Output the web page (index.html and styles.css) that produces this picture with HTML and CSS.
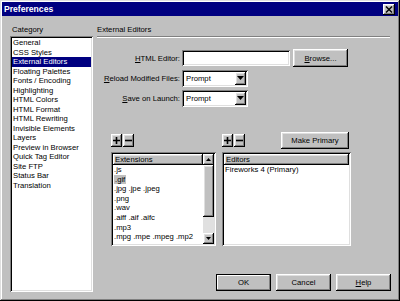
FILE: index.html
```html
<!DOCTYPE html>
<html lang="en">
<head>
    <meta charset="UTF-8">
    <title>Preferences</title>
    <link rel="stylesheet" href="styles.css">
</head>
<body>
    <div class="window">
        <div class="titlebar">
            <span class="title">Preferences</span>
            <span class="close-btn raised">
                <svg width="8" height="7" viewBox="0 0 8 7"><path d="M1 0.5 L7 6.5 M7 0.5 L1 6.5" stroke="#000" stroke-width="1.4"/></svg>
            </span>
        </div>

        <div class="content">
            <div class="category-col">
                <div class="group-label">Category</div>
                <ul class="category-list sunken">
                    <li>General</li>
                    <li>CSS Styles</li>
                    <li class="selected">External Editors</li>
                    <li>Floating Palettes</li>
                    <li>Fonts / Encoding</li>
                    <li>Highlighting</li>
                    <li>HTML Colors</li>
                    <li>HTML Format</li>
                    <li>HTML Rewriting</li>
                    <li>Invisible Elements</li>
                    <li>Layers</li>
                    <li>Preview in Browser</li>
                    <li>Quick Tag Editor</li>
                    <li>Site FTP</li>
                    <li>Status Bar</li>
                    <li>Translation</li>
                </ul>
            </div>

            <div class="panel">
                <div class="panel-title">External Editors</div>
                <div class="separator"></div>

                <div class="form-grid">
                    <div class="form-label"><u>H</u>TML Editor:</div>
                    <div class="field-row">
                        <span class="text-input sunken"></span>
                        <span class="btn raised browse-btn"><u>B</u>rowse...</span>
                    </div>

                    <div class="form-label"><u>R</u>eload Modified Files:</div>
                    <div class="field-row">
                        <span class="select sunken">
                            <span class="select-value">Prompt</span>
                            <span class="select-arrow raised">
                                <svg width="7" height="4" viewBox="0 0 7 4"><path d="M0 0 H7 L3.5 4 Z" fill="#000"/></svg>
                            </span>
                        </span>
                    </div>

                    <div class="form-label"><u>S</u>ave on Launch:</div>
                    <div class="field-row">
                        <span class="select sunken">
                            <span class="select-value">Prompt</span>
                            <span class="select-arrow raised">
                                <svg width="7" height="4" viewBox="0 0 7 4"><path d="M0 0 H7 L3.5 4 Z" fill="#000"/></svg>
                            </span>
                        </span>
                    </div>
                </div>

                <div class="lists">
                    <div class="list-col ext-col">
                        <div class="list-tools">
                            <span class="tool-btn raised">
                                <svg width="7" height="7" viewBox="0 0 7 7"><path d="M3.5 0 V7 M0 3.5 H7" stroke="#000" stroke-width="1.6"/></svg>
                            </span>
                            <span class="tool-btn raised">
                                <svg width="7" height="7" viewBox="0 0 7 7"><path d="M0 3.5 H7" stroke="#000" stroke-width="1.6"/></svg>
                            </span>
                        </div>
                        <div class="listbox sunken">
                            <div class="list-main">
                                <div class="list-header raised">Extensions</div>
                                <div class="list-row">.js</div>
                                <div class="list-row"><span class="inactive-sel">.gif</span></div>
                                <div class="list-row">.jpg .jpe .jpeg</div>
                                <div class="list-row">.png</div>
                                <div class="list-row">.wav</div>
                                <div class="list-row">.aiff .aif .aifc</div>
                                <div class="list-row">.mp3</div>
                                <div class="list-row">.mpg .mpe .mpeg .mp2</div>
                            </div>
                            <div class="scrollbar">
                                <span class="scroll-btn raised">
                                    <svg width="5" height="3" viewBox="0 0 5 3"><path d="M0 3 H5 L2.5 0 Z" fill="#000"/></svg>
                                </span>
                                <span class="scroll-thumb raised"></span>
                                <span class="scroll-track"></span>
                                <span class="scroll-btn raised">
                                    <svg width="5" height="3" viewBox="0 0 5 3"><path d="M0 0 H5 L2.5 3 Z" fill="#000"/></svg>
                                </span>
                            </div>
                        </div>
                    </div>

                    <div class="list-col editors-col">
                        <div class="list-tools">
                            <span class="tool-btn raised">
                                <svg width="7" height="7" viewBox="0 0 7 7"><path d="M3.5 0 V7 M0 3.5 H7" stroke="#000" stroke-width="1.6"/></svg>
                            </span>
                            <span class="tool-btn raised">
                                <svg width="7" height="7" viewBox="0 0 7 7"><path d="M0 3.5 H7" stroke="#000" stroke-width="1.6"/></svg>
                            </span>
                            <span class="btn raised primary-btn">Make Primary</span>
                        </div>
                        <div class="listbox sunken">
                            <div class="list-main">
                                <div class="list-header raised">Editors</div>
                                <div class="list-row">Fireworks 4 (Primary)</div>
                            </div>
                        </div>
                    </div>
                </div>

                <div class="dialog-buttons">
                    <span class="btn default-btn">OK</span>
                    <span class="btn raised">Cancel</span>
                    <span class="btn raised"><u>H</u>elp</span>
                </div>
            </div>
        </div>
    </div>
</body>
</html>
```

FILE: styles.css
```css
* {
    box-sizing: border-box;
}

body {
    margin: 0;
    font-family: "Liberation Sans", Arial, sans-serif;
    font-size: 7.7px;
    color: #000;
    background: #c0c0c0;
}

u {
    text-decoration-thickness: 1px;
    text-underline-offset: 1px;
}

/* bevels */
.raised {
    background: #c0c0c0;
    box-shadow: inset -1px -1px #000, inset 1px 1px #fff, inset -2px -2px #808080, inset 2px 2px #dfdfdf;
}

.sunken {
    background: #fff;
    box-shadow: inset 1px 1px #808080, inset -1px -1px #fff, inset 2px 2px #000, inset -2px -2px #dfdfdf;
}

.window {
    width: 400px;
    height: 301px;
    padding: 2px;
    background: #c0c0c0;
    box-shadow: inset -1px -1px #000, inset 1px 1px #dfdfdf, inset -2px -2px #808080, inset 2px 2px #fff;
    display: flex;
    flex-direction: column;
}

.titlebar {
    height: 14px;
    background: #000080;
    color: #fff;
    display: flex;
    align-items: center;
    justify-content: space-between;
    padding: 0 3px 0 2px;
}

.title {
    font-weight: bold;
    font-size: 8.6px;
}

.close-btn {
    width: 12px;
    height: 11px;
    display: flex;
    align-items: center;
    justify-content: center;
}

.content {
    display: flex;
    padding: 8px 0 0 8px;
}

/* category column */
.category-col {
    width: 83px;
}

.group-label {
    height: 12px;
    line-height: 11px;
    padding-left: 2px;
}

.category-list {
    list-style: none;
    margin: 0;
    padding: 2px;
    height: 256px;
}

.category-list li {
    height: 9.5px;
    line-height: 9.5px;
    padding-left: 1px;
    white-space: nowrap;
}

.category-list li.selected {
    background: #000080;
    color: #fff;
}

/* right panel */
.panel {
    width: 294px;
    margin-left: 4px;
}

.panel-title {
    height: 12px;
    line-height: 11px;
}

.separator {
    width: 293px;
    border-top: 1px solid #808080;
    border-bottom: 1px solid #fff;
}

.form-grid {
    margin-top: 10px;
    display: grid;
    grid-template-columns: 83px auto;
    column-gap: 2px;
    grid-auto-rows: 20px;
    align-items: center;
}

.form-label {
    text-align: right;
    white-space: nowrap;
}

.field-row {
    display: flex;
    align-items: center;
    gap: 3px;
}

.text-input {
    width: 108px;
    height: 16px;
}

.btn {
    display: flex;
    align-items: center;
    justify-content: center;
    height: 17px;
    width: 55px;
}

.browse-btn {
    height: 18px;
}

.select {
    width: 66px;
    height: 17px;
    display: flex;
    align-items: center;
    padding: 2px;
}

.select-value {
    flex: 1;
    padding-left: 2px;
}

.select-arrow {
    width: 11px;
    height: 13px;
    display: flex;
    align-items: center;
    justify-content: center;
}

/* lists */
.lists {
    margin-top: 24px;
    padding-left: 14px;
    display: flex;
    gap: 6px;
}

.ext-col {
    width: 105px;
}

.editors-col {
    width: 129px;
}

.list-tools {
    height: 17px;
    margin-bottom: 3px;
    display: flex;
    align-items: center;
    gap: 1px;
}

.tool-btn {
    width: 11px;
    height: 13px;
    display: flex;
    align-items: center;
    justify-content: center;
}

.primary-btn {
    width: 68px;
    margin-left: auto;
    margin-right: 2px;
}

.listbox {
    height: 94px;
    padding: 2px;
    display: flex;
}

.list-main {
    flex: 1;
    overflow: hidden;
}

.list-header {
    height: 11px;
    line-height: 11px;
    padding-left: 2px;
}

.list-row {
    height: 9.6px;
    line-height: 9.6px;
    padding-left: 1px;
    white-space: nowrap;
}

.inactive-sel {
    background: #c0c0c0;
    padding: 0 1px;
}

.scrollbar {
    width: 11px;
    display: flex;
    flex-direction: column;
}

.scroll-btn {
    height: 11px;
    display: flex;
    align-items: center;
    justify-content: center;
}

.scroll-thumb {
    height: 52px;
}

.scroll-track {
    flex: 1;
    background: #e0e0e0;
}

/* bottom buttons */
.dialog-buttons {
    margin-top: 28px;
    display: flex;
    justify-content: flex-end;
    gap: 5px;
}

.default-btn {
    background: #c0c0c0;
    box-shadow: inset 0 0 0 1px #000, inset -2px -2px #808080, inset 2px 2px #fff;
}
```
